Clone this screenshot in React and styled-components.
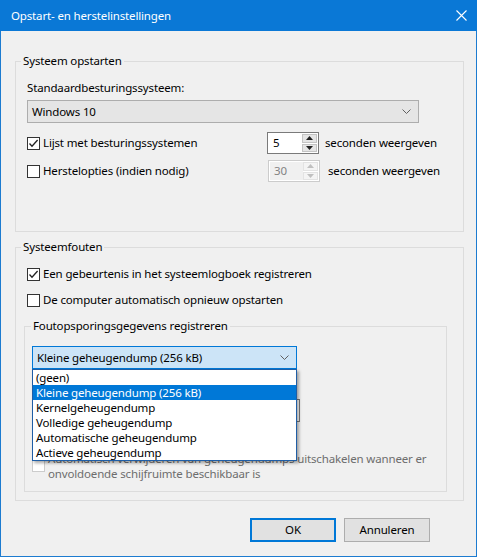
import React from "react";
import styled, { createGlobalStyle } from "styled-components";

const Global = createGlobalStyle`
  html, body { margin: 0; padding: 0; background: #f0f0f0; }
  body { font-family: "Noto Sans", "Segoe UI", sans-serif; font-size: 11.5px; letter-spacing: -0.15px; color: #000; }
  * { box-sizing: border-box; }
`;

const Window = styled.div`
  width: 477px;
  height: 557px;
  display: flex;
  flex-direction: column;
  border: 1px solid #1c7bd0;
  border-top: none;
  background: #f0f0f0;
`;

const TitleBar = styled.div`
  height: 31px;
  flex: none;
  margin: 0 -1px;
  background: #0a78d6;
  color: #fff;
  display: flex;
  align-items: center;
  justify-content: space-between;
  padding: 0 10px 0 11px;
`;

const Body = styled.div`
  flex: 1;
  display: flex;
  flex-direction: column;
  padding: 22px 12px 0 14px;
`;

const Group = styled.fieldset`
  margin: ${(p) => p.$mt || 0}px 0 0 ${(p) => p.$ml || 0}px;
  padding: 0;
  border: 1px solid #dcdcdc;
  height: ${(p) => p.$h}px;
  width: ${(p) => p.$w}px;
  min-width: 0;
  position: relative;
`;

const Legend = styled.legend`
  margin-left: ${(p) => p.$ml}px;
  padding: 0 2px;
  line-height: 16px;
  height: 16px;
`;

const Content = styled.div`
  display: flex;
  flex-direction: column;
  padding: ${(p) => p.$pt || 0}px 0 0 ${(p) => p.$pl || 0}px;
`;

const Label = styled.div`
  line-height: 16px;
  margin-top: ${(p) => p.$mt || 0}px;
  color: ${(p) => (p.$disabled ? "#6d6d6d" : "#000")};
`;

const Combo = styled.div`
  position: relative;
  width: ${(p) => p.$w}px;
  height: 23px;
  margin-top: ${(p) => p.$mt || 0}px;
  margin-left: ${(p) => p.$ml || 0}px;
  border: 1px solid ${(p) => (p.$open ? "#0078d7" : "#adadad")};
  background: ${(p) => (p.$open ? "#cce4f7" : "#e5e5e5")};
  display: flex;
  align-items: center;
  justify-content: space-between;
  padding: 0 7px 0 4px;
  line-height: 16px;
`;

const DropList = styled.div`
  position: absolute;
  top: 22px;
  left: -1px;
  width: ${(p) => p.$w}px;
  background: #fff;
  border: 1px solid #1f5ea6;
  box-shadow: 2px 2px 3px rgba(0, 0, 0, 0.35);
  z-index: 5;
  display: flex;
  flex-direction: column;
`;

const ListItem = styled.div`
  height: 15px;
  line-height: 15px;
  padding-left: 3px;
  white-space: nowrap;
  background: ${(p) => (p.$sel ? "#0078d7" : "transparent")};
  color: ${(p) => (p.$sel ? "#fff" : "#000")};
`;

const Row = styled.div`
  display: flex;
  align-items: ${(p) => p.$align || "center"};
  height: ${(p) => p.$h || 22}px;
  margin-top: ${(p) => p.$mt || 0}px;
`;

const CheckCell = styled.div`
  display: flex;
  align-items: ${(p) => p.$align || "center"};
  width: ${(p) => (p.$w ? p.$w + "px" : "auto")};
  gap: 3px;
  color: ${(p) => (p.$disabled ? "#6d6d6d" : "#000")};
  line-height: ${(p) => p.$lh || 16}px;
  white-space: nowrap;
`;

const Box = styled.div`
  width: 13px;
  height: 13px;
  flex: none;
  border: 1px solid ${(p) => (p.$disabled ? "#cccccc" : "#333333")};
  background: #fff;
  display: flex;
  align-items: center;
  justify-content: center;
  margin-top: ${(p) => p.$mt || 0}px;
`;

const Spin = styled.div`
  display: flex;
  width: 52px;
  height: 22px;
  margin-left: ${(p) => p.$ml || 0}px;
  border: 1px solid ${(p) => (p.$disabled ? "#cccccc" : "#7a7a7a")};
  background: #fff;
  padding: 1px;
`;

const SpinInput = styled.div`
  flex: 1;
  line-height: 18px;
  padding-left: 4px;
  color: ${(p) => (p.$disabled ? "#838383" : "#000")};
  background: ${(p) => (p.$disabled ? "#f0f0f0" : "#fff")};
`;

const SpinButtons = styled.div`
  width: 15px;
  display: flex;
  flex-direction: column;
  gap: 1px;
`;

const SpinBtn = styled.div`
  flex: 1;
  background: ${(p) => (p.$disabled ? "#f4f4f4" : "#e5e5e5")};
  border: 1px solid ${(p) => (p.$disabled ? "#e3e3e3" : "#c4c4c4")};
  display: flex;
  align-items: center;
  justify-content: center;
`;

const SpinText = styled.span`
  margin-left: ${(p) => p.$ml}px;
  line-height: 16px;
`;

const TextBox = styled.div`
  width: ${(p) => p.$w}px;
  height: 23px;
  margin-top: ${(p) => p.$mt || 0}px;
  border: 1px solid #7a7a7a;
  background: #fff;
  padding: 2px 4px;
  line-height: 16px;
`;

const Footer = styled.div`
  display: flex;
  justify-content: flex-end;
  gap: 8px;
  margin-top: 17px;
  padding-right: 34px;
`;

const Button = styled.div`
  width: 86px;
  height: 24px;
  display: flex;
  align-items: center;
  justify-content: center;
  background: #e1e1e1;
  border: ${(p) => (p.$default ? "2px solid #0078d7" : "1px solid #adadad")};
  line-height: 16px;
`;

const Chevron = () => (
  <svg width="9" height="5" viewBox="0 0 9 5">
    <polyline points="0.5,0.5 4.5,4.5 8.5,0.5" fill="none" stroke="#606060" strokeWidth="1" />
  </svg>
);

const Check = () => (
  <svg width="11" height="11" viewBox="0 0 11 11">
    <polyline points="1.5,5.5 4,8.2 9.6,2" fill="none" stroke="#222" strokeWidth="1.3" />
  </svg>
);

const Arrow = ({ up, disabled }) => (
  <svg width="7" height="4" viewBox="0 0 7 4">
    <polygon
      points={up ? "0,4 7,4 3.5,0" : "0,0 7,0 3.5,4"}
      fill={disabled ? "#c0c0c0" : "#222"}
    />
  </svg>
);

const Close = () => (
  <svg width="11" height="11" viewBox="0 0 11 11">
    <path d="M0.5 0.5 L10.5 10.5 M10.5 0.5 L0.5 10.5" stroke="#fff" strokeWidth="1.1" />
  </svg>
);

const CheckBox = ({ checked, disabled, mt }) => (
  <Box $disabled={disabled} $mt={mt}>{checked && <Check />}</Box>
);

const SpinBox = ({ value, disabled, ml }) => (
  <Spin $disabled={disabled} $ml={ml}>
    <SpinInput $disabled={disabled}>{value}</SpinInput>
    <SpinButtons>
      <SpinBtn $disabled={disabled}><Arrow up disabled={disabled} /></SpinBtn>
      <SpinBtn $disabled={disabled}><Arrow disabled={disabled} /></SpinBtn>
    </SpinButtons>
  </Spin>
);

const dumpOptions = [
  "(geen)",
  "Kleine geheugendump (256 kB)",
  "Kernelgeheugendump",
  "Volledige geheugendump",
  "Automatische geheugendump",
  "Actieve geheugendump",
];

export default function App() {
  return (
    <>
      <Global />
      <Window>
        <TitleBar>
          <span>Opstart- en herstelinstellingen</span>
          <Close />
        </TitleBar>
        <Body>
          <Group $h={179} $w={449}>
            <Legend $ml={5}>Systeem opstarten</Legend>
            <Content $pl={11} $pt={11}>
              <Label>Standaardbesturingssysteem:</Label>
              <Combo $w={392} $mt={4}>
                <span>Windows 10</span>
                <Chevron />
              </Combo>
              <Row $mt={9}>
                <CheckCell $w={240}>
                  <CheckBox checked />
                  <span>Lijst met besturingssystemen</span>
                </CheckCell>
                <SpinBox value="5" />
                <SpinText $ml={6}>seconden weergeven</SpinText>
              </Row>
              <Row $mt={6}>
                <CheckCell $w={240}>
                  <CheckBox />
                  <span>Herstelopties (indien nodig)</span>
                </CheckCell>
                <SpinBox value="30" disabled ml={1} />
                <SpinText $ml={8}>seconden weergeven</SpinText>
              </Row>
            </Content>
          </Group>

          <Group $h={262} $w={449} $mt={7}>
            <Legend $ml={5}>Systeemfouten</Legend>
            <Content $pl={11} $pt={11}>
              <Row $h={16}>
                <CheckCell>
                  <CheckBox checked />
                  <span>Een gebeurtenis in het systeemlogboek registreren</span>
                </CheckCell>
              </Row>
              <Row $h={16} $mt={10}>
                <CheckCell>
                  <CheckBox />
                  <span>De computer automatisch opnieuw opstarten</span>
                </CheckCell>
              </Row>
            </Content>
            <Group $h={174} $w={423} $mt={10} $ml={8}>
              <Legend $ml={6}>Foutopsporingsgegevens registreren</Legend>
              <Content $pl={7} $pt={12}>
                <Combo $w={265} $open>
                  <span>Kleine geheugendump (256 kB)</span>
                  <Chevron />
                  <DropList $w={265}>
                    {dumpOptions.map((o, i) => (
                      <ListItem key={o} $sel={i === 1}>{o}</ListItem>
                    ))}
                  </DropList>
                </Combo>
                <Label $mt={8}>Dumpbestand:</Label>
                <TextBox $w={268} $mt={6}>%SystemRoot%\Minidump</TextBox>
                <Row $h={16} $mt={8}>
                  <CheckCell $disabled>
                    <CheckBox disabled />
                    <span>Bestaande bestanden overschrijven</span>
                  </CheckCell>
                </Row>
                <Row $h={30} $mt={5} $align="flex-start">
                  <CheckCell $disabled $align="flex-start" $lh={15}>
                    <CheckBox disabled mt={8} />
                    <span>
                      Automatisch verwijderen van geheugendumps uitschakelen wanneer er
                      <br />
                      onvoldoende schijfruimte beschikbaar is
                    </span>
                  </CheckCell>
                </Row>
              </Content>
            </Group>
          </Group>

          <Footer>
            <Button $default>OK</Button>
            <Button>Annuleren</Button>
          </Footer>
        </Body>
      </Window>
    </>
  );
}
